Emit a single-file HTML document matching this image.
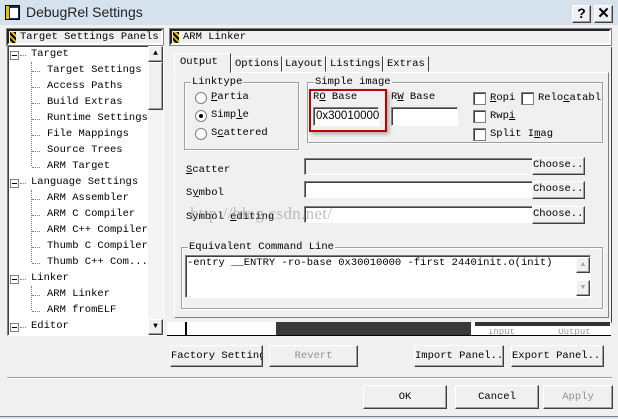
<!DOCTYPE html>
<html><head><meta charset="utf-8"><style>
*{box-sizing:border-box;margin:0;padding:0}
body{width:618px;height:419px;background:#f0f0f0;position:relative;overflow:hidden;font-family:"Liberation Mono","Noto Sans CJK SC",monospace;font-size:10.5px;color:#000}
.a{position:absolute;white-space:nowrap}
.sunk{border:1px solid;border-color:#808080 #fff #fff #808080;box-shadow:inset 1px 1px 0 #404040}
.btn{position:absolute;background:#f0f0f0;border:1px solid;border-color:#fff #404040 #404040 #fff;box-shadow:inset -1px -1px 0 #a0a0a0;text-align:center;white-space:nowrap;overflow:hidden}
.grp{position:absolute;border:1px solid #a0a0a0;box-shadow:1px 1px 0 #fff inset,1px 1px 0 #fff}
.gl{position:absolute;top:-7px;left:6px;background:#f0f0f0;padding:0 1px}
.edit{position:absolute;background:#fff;border:1px solid;border-color:#808080 #fff #fff #808080;box-shadow:inset 1px 1px 0 #404040}
.rad{position:absolute;width:12px;height:12px;border-radius:50%;background:#fff;border:1px solid #808080}
.chk{position:absolute;width:13px;height:13px;background:#fff;border:1px solid #808080;box-shadow:inset 1px 1px 0 #404040}
.hdr{position:absolute;background:#f0f0f0;border:2px solid #222;border-right-color:#fff;border-bottom-color:#fff;outline:1px solid #808080}
.ic{position:absolute;left:1px;top:1px;width:6px;height:11px;background:repeating-linear-gradient(45deg,#e8c000 0 2px,#000 2px 4px)}
.t{position:absolute;white-space:nowrap}
.pm{position:absolute;width:9px;height:9px;border:1px solid #808080;background:#fff}
.pm:after{content:"";position:absolute;left:1px;top:3px;width:5px;height:1px;background:#000}
.vl{position:absolute;width:1px;border-left:1px dotted #808080}
.hl{position:absolute;height:1px;border-top:1px dotted #808080}
</style></head><body>
<div class="a" style="left:0;top:0;width:618px;height:25px;background:#d5e2ee"></div>
<div class="a" style="left:5px;top:5px;width:15px;height:15px;background:#1a2a6a;border:1px solid #000"><div style="position:absolute;left:4px;top:2px;width:8px;height:10px;background:#fff"></div><div style="position:absolute;left:0;top:0;width:3px;height:13px;background:#e8c000"></div></div>
<div class="a" style="left:26px;top:4px;font-family:'Liberation Sans',sans-serif;font-size:14px;color:#222">DebugRel Settings</div>
<div class="btn" style="left:572px;top:5px;width:19px;height:18px;font:bold 14px 'Liberation Sans',sans-serif;line-height:15px">?</div>
<div class="btn" style="left:594px;top:5px;width:19px;height:18px;font:bold 15px 'Liberation Sans',sans-serif;line-height:15px">✕</div>

<div class="hdr" style="left:7px;top:29px;width:156px;height:16px"><div class="ic"></div><span class="t" style="left:11px;top:0">Target Settings Panels</span></div>
<div class="a sunk" style="left:7px;top:45px;width:157px;height:291px;background:#fff"></div>
<div class="a" style="left:148px;top:46px;width:15px;height:289px;background:#f4f4f4"></div>
<div class="btn" style="left:148px;top:46px;width:15px;height:16px;font-size:8px;line-height:13px">▲</div>
<div class="btn" style="left:148px;top:62px;width:15px;height:48px"></div>
<div class="btn" style="left:148px;top:319px;width:15px;height:16px;font-size:8px;line-height:13px">▼</div>

<div class="a" style="left:0;top:2px;width:148px;height:333px;overflow:visible">
<div class="pm" style="left:10px;top:49px"></div><div class="hl" style="left:20px;top:53px;width:6px"></div><span class="a" style="left:31px;top:46px">Target</span>
<div class="vl" style="left:31px;top:60px;height:104px"></div>
<div class="hl" style="left:32px;top:69px;width:8px"></div><span class="a" style="left:47px;top:62px">Target Settings</span>
<div class="hl" style="left:32px;top:85px;width:8px"></div><span class="a" style="left:47px;top:78px">Access Paths</span>
<div class="hl" style="left:32px;top:101px;width:8px"></div><span class="a" style="left:47px;top:94px">Build Extras</span>
<div class="hl" style="left:32px;top:117px;width:8px"></div><span class="a" style="left:47px;top:110px">Runtime Settings</span>
<div class="hl" style="left:32px;top:133px;width:8px"></div><span class="a" style="left:47px;top:126px">File Mappings</span>
<div class="hl" style="left:32px;top:149px;width:8px"></div><span class="a" style="left:47px;top:142px">Source Trees</span>
<div class="hl" style="left:32px;top:165px;width:8px"></div><span class="a" style="left:47px;top:158px">ARM Target</span>
<div class="pm" style="left:10px;top:177px"></div><div class="hl" style="left:20px;top:181px;width:6px"></div><span class="a" style="left:31px;top:174px">Language Settings</span>
<div class="vl" style="left:31px;top:188px;height:72px"></div>
<div class="hl" style="left:32px;top:197px;width:8px"></div><span class="a" style="left:47px;top:190px">ARM Assembler</span>
<div class="hl" style="left:32px;top:213px;width:8px"></div><span class="a" style="left:47px;top:206px">ARM C Compiler</span>
<div class="hl" style="left:32px;top:229px;width:8px"></div><span class="a" style="left:47px;top:222px">ARM C++ Compiler</span>
<div class="hl" style="left:32px;top:245px;width:8px"></div><span class="a" style="left:47px;top:238px">Thumb C Compiler</span>
<div class="hl" style="left:32px;top:261px;width:8px"></div><span class="a" style="left:47px;top:254px">Thumb C++ Com...</span>
<div class="pm" style="left:10px;top:273px"></div><div class="hl" style="left:20px;top:277px;width:6px"></div><span class="a" style="left:31px;top:270px">Linker</span>
<div class="vl" style="left:31px;top:284px;height:24px"></div>
<div class="hl" style="left:32px;top:293px;width:8px"></div><span class="a" style="left:47px;top:286px">ARM Linker</span>
<div class="hl" style="left:32px;top:309px;width:8px"></div><span class="a" style="left:47px;top:302px">ARM fromELF</span>
<div class="pm" style="left:10px;top:321px"></div><div class="hl" style="left:20px;top:325px;width:6px"></div><span class="a" style="left:31px;top:318px">Editor</span>
</div>

<div class="hdr" style="left:170px;top:29px;width:441px;height:16px"><div class="ic"></div><span class="t" style="left:11px;top:0">ARM Linker</span></div>
<div class="a" style="left:167px;top:47px;width:445px;height:276px;border-right:1px solid #404040;border-bottom:1px solid #808080"></div>
<div class="a" style="left:174px;top:72px;width:435px;height:246px;border:1px solid;border-color:#fff #808080 #808080 #fff"></div>
<div class="a" style="left:174px;top:53px;width:57px;height:20px;border:1px solid;border-color:#fff #404040 transparent #fff;background:#f0f0f0"><span class="t" style="left:5px;top:2px">Output</span></div>
<div class="a" style="left:231px;top:56px;width:51px;height:16px;border:1px solid;border-color:#fff #404040 transparent #fff"><span class="t" style="left:3px;top:1px">Options</span></div>
<div class="a" style="left:282px;top:56px;width:44px;height:16px;border:1px solid;border-color:#fff #404040 transparent #fff"><span class="t" style="left:2px;top:1px">Layout</span></div>
<div class="a" style="left:326px;top:56px;width:57px;height:16px;border:1px solid;border-color:#fff #404040 transparent #fff"><span class="t" style="left:3px;top:1px">Listings</span></div>
<div class="a" style="left:383px;top:56px;width:46px;height:16px;border:1px solid;border-color:#fff #404040 transparent #fff"><span class="t" style="left:3px;top:1px">Extras</span></div>

<div class="grp" style="left:184px;top:82px;width:115px;height:68px"><span class="gl">Linktype</span></div>
<div class="rad" style="left:195px;top:92px"></div><span class="a" style="left:211px;top:91px"><u>P</u>artia</span>
<div class="rad" style="left:195px;top:110px"><div style="position:absolute;left:3px;top:3px;width:4px;height:4px;border-radius:50%;background:#000"></div></div><span class="a" style="left:211px;top:109px">Simp<u>l</u>e</span>
<div class="rad" style="left:195px;top:128px"></div><span class="a" style="left:211px;top:127px">S<u>c</u>attered</span>

<div class="grp" style="left:307px;top:82px;width:296px;height:61px"><span class="gl">Simple image</span></div>
<div class="a" style="left:309px;top:89px;width:78px;height:43px;border:2px solid #c00000;box-shadow:2px 2px 4px rgba(0,0,0,.3)"></div>
<span class="a" style="left:313px;top:91px">R<u>O</u> Base</span>
<span class="a" style="left:391px;top:91px">R<u>W</u> Base</span>
<div class="edit" style="left:313px;top:107px;width:66px;height:19px"><span class="t" style="left:2px;top:2px;font-family:'Liberation Sans',sans-serif;font-size:11.5px">0x30010000</span></div>
<div class="edit" style="left:391px;top:107px;width:67px;height:19px"></div>
<div class="chk" style="left:473px;top:92px"></div><span class="a" style="left:490px;top:92px"><u>R</u>opi</span>
<div class="chk" style="left:521px;top:92px"></div><span class="a" style="left:538px;top:92px">Relo<u>c</u>atabl</span>
<div class="chk" style="left:473px;top:110px"></div><span class="a" style="left:490px;top:110px">Rwp<u>i</u></span>
<div class="chk" style="left:473px;top:128px"></div><span class="a" style="left:490px;top:128px">Split I<u>m</u>ag</span>

<span class="a" style="left:186px;top:164px"><u>S</u>catter</span>
<div class="edit" style="left:304px;top:158px;width:229px;height:17px;background:#f0f0f0"></div>
<div class="btn" style="left:532px;top:157px;width:53px;height:18px;line-height:15px">Choose...</div>
<span class="a" style="left:186px;top:187px">S<u>y</u>mbol</span>
<div class="edit" style="left:304px;top:181px;width:229px;height:17px"></div>
<div class="btn" style="left:532px;top:181px;width:53px;height:18px;line-height:15px">Choose...</div>
<span class="a" style="left:186px;top:211px">Symbol <u>e</u>diting</span>
<div class="edit" style="left:304px;top:206px;width:229px;height:17px"></div>
<div class="btn" style="left:532px;top:206px;width:53px;height:18px;line-height:15px">Choose...</div>
<span class="a" style="left:190px;top:204px;font-family:'Liberation Serif',serif;font-size:17px;letter-spacing:0.3px;color:rgba(140,140,140,.55);z-index:5">http://blog.csdn.net/</span>

<div class="grp" style="left:181px;top:247px;width:422px;height:62px"><span class="gl">Equivalent Command Line</span></div>
<div class="edit" style="left:185px;top:255px;width:406px;height:43px"><span class="t" style="left:1px;top:1px">-entry __ENTRY -ro-base 0x30010000 -first 2440init.o(init)</span></div>
<div class="btn" style="left:576px;top:257px;width:14px;height:16px;font-size:7px;color:#a0a0a0;line-height:14px">▲</div>
<div class="btn" style="left:576px;top:280px;width:14px;height:16px;font-size:7px;color:#a0a0a0;line-height:14px">▼</div>

<div class="a" style="left:167px;top:322px;width:444px;height:14px;background:#fff;border-bottom:1px solid #000"></div>
<div class="a" style="left:185px;top:322px;width:2px;height:13px;background:#000"></div>
<div class="a" style="left:276px;top:322px;width:195px;height:13px;background:#3a3a3a"></div>
<div class="a" style="left:475px;top:322px;width:135px;height:4px;background:#333"></div>
<span class="a" style="left:488px;top:329px;font-size:9px;color:#999;line-height:6px;overflow:hidden;height:6px">Input&nbsp;&nbsp;&nbsp;&nbsp;&nbsp;&nbsp;&nbsp;&nbsp;Output</span>

<div class="btn" style="left:170px;top:345px;width:93px;height:22px;line-height:20px;text-align:right;padding-right:1px">Factory Settings</div>
<div class="btn" style="left:269px;top:345px;width:89px;height:22px;line-height:20px;color:#909090">Revert</div>
<div class="btn" style="left:414px;top:345px;width:90px;height:22px;line-height:20px">Import Panel...</div>
<div class="btn" style="left:511px;top:345px;width:93px;height:22px;line-height:20px">Export Panel...</div>
<div class="a" style="left:7px;top:377px;width:605px;height:2px;border-top:1px solid #a0a0a0;border-bottom:1px solid #fff"></div>
<div class="btn" style="left:363px;top:385px;width:84px;height:24px;line-height:22px">OK</div>
<div class="btn" style="left:455px;top:385px;width:84px;height:24px;line-height:22px">Cancel</div>
<div class="btn" style="left:543px;top:385px;width:70px;height:24px;line-height:22px;color:#909090">Apply</div>
<div class="a" style="left:0;top:416px;width:618px;height:3px;background:#d5e2ee;border-top:1px solid #808080"></div>
</body></html>
